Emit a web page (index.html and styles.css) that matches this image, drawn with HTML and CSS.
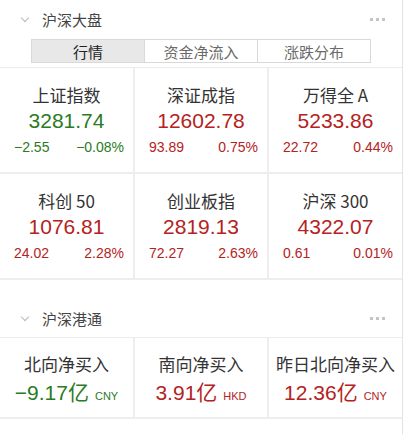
FILE: index.html
```html
<!DOCTYPE html>
<html lang="zh">
<head>
<meta charset="utf-8">
<link rel="stylesheet" href="styles.css">
</head>
<body>
<div class="page">
  <div class="sec-head">
    <span class="chev"></span>
    <span class="sec-title">沪深大盘</span>
    <span class="more"><i></i><i></i><i></i></span>
  </div>
  <div class="tabs-wrap">
    <div class="tabs">
      <div class="tab active">行情</div>
      <div class="tab">资金净流入</div>
      <div class="tab">涨跌分布</div>
    </div>
  </div>
  <div class="grid">
    <div class="cell"><div class="name">上证指数</div><div class="val green">3281.74</div><div class="chg green"><span>−2.55</span><span>−0.08%</span></div></div>
    <div class="cell"><div class="name">深证成指</div><div class="val red">12602.78</div><div class="chg red"><span>93.89</span><span>0.75%</span></div></div>
    <div class="cell"><div class="name">万得全 A</div><div class="val red">5233.86</div><div class="chg red"><span>22.72</span><span>0.44%</span></div></div>
    <div class="cell"><div class="name">科创 50</div><div class="val red">1076.81</div><div class="chg red"><span>24.02</span><span>2.28%</span></div></div>
    <div class="cell"><div class="name">创业板指</div><div class="val red">2819.13</div><div class="chg red"><span>72.27</span><span>2.63%</span></div></div>
    <div class="cell"><div class="name">沪深 300</div><div class="val red">4322.07</div><div class="chg red"><span>0.61</span><span>0.01%</span></div></div>
  </div>
  <div class="gap"></div>
  <div class="sec-head sec2">
    <span class="chev"></span>
    <span class="sec-title">沪深港通</span>
    <span class="more"><i></i><i></i><i></i></span>
  </div>
  <div class="grid grid2">
    <div class="cell c2"><div class="name">北向净买入</div><div class="val green">−9.17亿<small>CNY</small></div></div>
    <div class="cell c2"><div class="name">南向净买入</div><div class="val red">3.91亿<small>HKD</small></div></div>
    <div class="cell c2"><div class="name">昨日北向净买入</div><div class="val red">12.36亿<small>CNY</small></div></div>
  </div>
</div>
</body>
</html>
```
FILE: styles.css
```css
* { box-sizing: border-box; }
html, body { margin: 0; padding: 0; background: #fff; }
body { font-family: "Noto Sans CJK SC", "Liberation Sans", sans-serif; }
.page {
  width: 403px;
  height: 434px;
  border-right: 1px solid #e2e2e2;
  background: #fff;
}
.sec-head {
  height: 39px;
  display: flex;
  align-items: center;
  padding-left: 22px;
  padding-right: 17px;
}
.chev {
  width: 6px;
  height: 6px;
  border-right: 1px solid #b8b8b8;
  border-bottom: 1px solid #b8b8b8;
  transform: rotate(45deg);
  margin-top: -3px;
  margin-right: 14px;
}
.sec-title {
  font-size: 15px;
  color: #444;
  flex: 1;
}
.more { display: flex; gap: 3px; }
.more i {
  display: block;
  width: 3px;
  height: 3px;
  background: #c4c4c4;
}
.tabs-wrap {
  padding: 0 0 4px 31px;
  border-bottom: 1px solid #ececec;
  height: 29px;
}
.tabs {
  width: 340px;
  height: 24px;
  display: flex;
  border: 1px solid #d9d9d9;
}
.tab {
  flex: 1;
  display: flex;
  align-items: center;
  justify-content: center;
  font-size: 15px;
  color: #6a6a6a;
  border-left: 1px solid #d9d9d9;
}
.tab:first-child { border-left: none; }
.tab.active { background: #e8e8e8; color: #222; }
.grid {
  display: grid;
  grid-template-columns: 133px 132px 133px;
  gap: 2px;
  background: #eeeeee;
  padding-bottom: 2px;
}
.cell {
  background: #fff;
  height: 104px;
  display: flex;
  flex-direction: column;
  align-items: center;
  padding-top: 15px;
}
.name {
  font-size: 17px;
  color: #333;
  line-height: 24px;
}
.val {
  font-family: "Liberation Sans", "Noto Sans CJK SC", sans-serif;
  font-size: 21px;
  line-height: 28px;
}
.chg {
  font-family: "Liberation Sans", sans-serif;
  font-size: 14px;
  width: 100%;
  display: flex;
  justify-content: space-between;
  padding: 0 9px 0 14px;
  margin-top: 4px;
}
.green { color: #2a7b24; }
.red { color: #b52222; }
.gap { height: 19px; }
.sec2 { height: 38px; }
.grid2 { border-top: 1px solid #ececec; }
.c2 { height: 79px; padding-top: 14px; }
.c2 .val { margin-top: 3px; }
.val small {
  font-size: 11px;
  margin-left: 6px;
}
```
